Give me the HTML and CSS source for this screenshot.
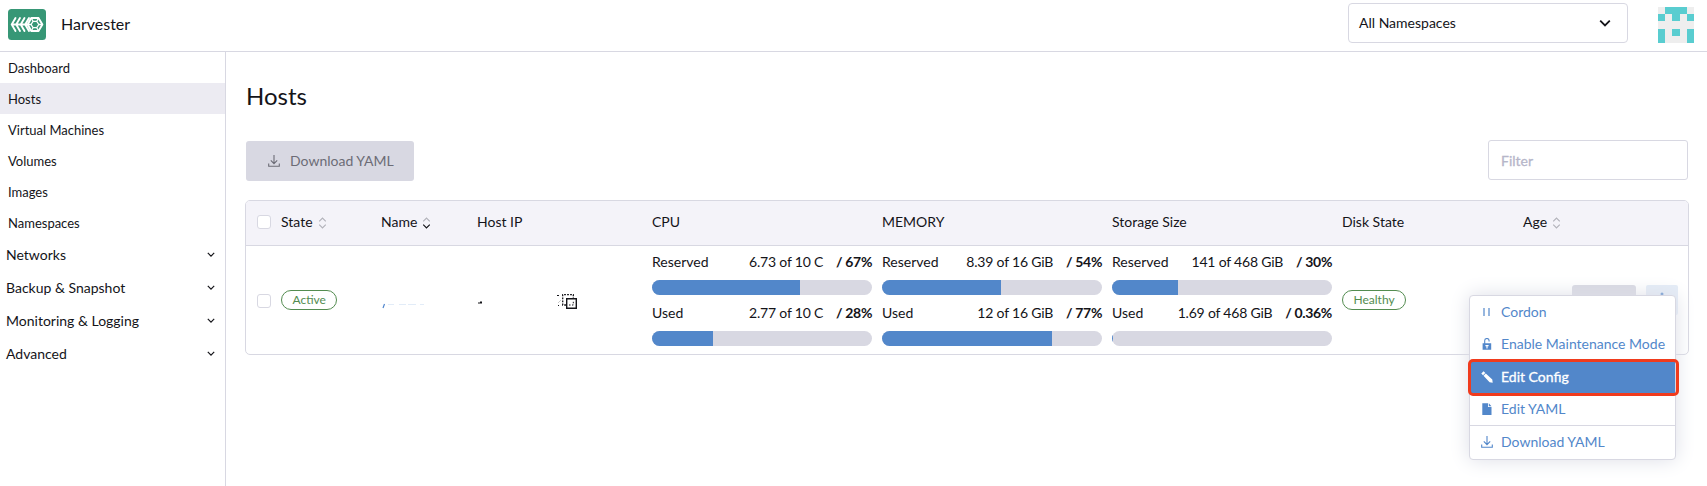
FILE: index.html
```html
<!DOCTYPE html>
<html lang="en">
<head>
<meta charset="utf-8">
<title>Harvester</title>
<link rel="stylesheet" href="styles.css">
</head>
<body>
<svg width="0" height="0" class="defs">
  <symbol id="chev" viewBox="0 0 10 6"><path d="M1 1l4 4 4-4" fill="none" stroke="currentColor" stroke-width="1.500"/></symbol>
  <symbol id="dl" viewBox="0 0 12 12"><path d="M6 0v8.500M2.800 5.400L6 8.600l3.200-3.200M.7 8.500v2.800h10.600V8.500" fill="none" stroke="currentColor" stroke-width="1.100"/></symbol>
  <symbol id="sort" viewBox="0 0 8 12"><path d="M.7 4.300L4 1l3.300 3.300" fill="none" stroke="#b3b3bb" stroke-width="1.200"/><path d="M.7 7.700L4 11l3.300-3.300" fill="none" stroke="currentColor" stroke-width="1.200"/></symbol>
</svg>
<header class="top">
  <svg class="logo" viewBox="0 0 38 31"><rect width="38" height="31" rx="3.500" fill="#379776"/>
    <g fill="none" stroke="#fff" stroke-linejoin="round" stroke-linecap="round"><path stroke-width="1.900" d="M7.500 9L3.700 15.500l3.800 6.500M12 9l-3.800 6.500L12 22M16.500 9l-3.800 6.500 3.800 6.500M21 9l-3.800 6.500L21 22M3.700 15.500H20M23.300 9h7.200l3.900 6.500-3.900 6.500h-7.200l-3.600-6.500z"/><path stroke-width="1.300" d="M25 12.300h3.800l2 3.200-2 3.200H25l-1.900-3.200zM25 12.300L23.300 9M28.800 12.300L30.500 9M30.800 15.500h3.600M28.800 18.700l1.700 3.300M25 18.700L23.300 22M19.700 15.500h3.400"/></g></svg>
  <div class="brand">Harvester</div>
  <div class="ns"><span>All Namespaces</span><svg class="nschev"><use href="#chev"/></svg></div>
  <svg class="avatar" viewBox="0 0 5 5" shape-rendering="crispEdges"><path fill="#eee" d="M0 0h5v5H0z"/><path fill="#59cdd0" d="M1 0h3v1H3v1H2V1H1zM0 1h1v1H0zM4 1h1v1H4zM0 3h1v2H0zM2 3h1v1H2zM4 3h1v2H4z"/></svg>
</header>
<div class="body">
  <nav class="side">
    <a class="item">Dashboard</a><a class="item on">Hosts</a><a class="item">Virtual Machines</a><a class="item">Volumes</a><a class="item">Images</a><a class="item">Namespaces</a>
    <a class="group"><span>Networks</span><svg><use href="#chev"/></svg></a>
    <a class="group"><span>Backup &amp; Snapshot</span><svg><use href="#chev"/></svg></a>
    <a class="group"><span>Monitoring &amp; Logging</span><svg><use href="#chev"/></svg></a>
    <a class="group"><span>Advanced</span><svg><use href="#chev"/></svg></a>
  </nav>
  <main>
    <h1>Hosts</h1>
    <div class="tools">
      <div class="btn"><svg><use href="#dl"/></svg><span>Download YAML</span></div>
      <div class="filter">Filter</div>
    </div>
    <div class="table">
      <div class="row head">
        <div><i class="check"></i></div><div>State<svg class="sort"><use href="#sort"/></svg></div><div>Name<svg class="sort dark"><use href="#sort"/></svg></div><div>Host IP</div><div>CPU</div><div>MEMORY</div><div>Storage Size</div><div>Disk State</div><div>Age<svg class="sort"><use href="#sort"/></svg></div>
      </div>
      <div class="row data">
        <div><i class="check"></i></div>
        <div><span class="pill">Active</span></div>
        <div><svg class="trace" viewBox="0 0 46 8"><path d="M3.500 1L2 5" stroke="#4c83cc" stroke-width="1.200"/><path d="M7 1.500h6M18 1.500h7M27 1.500h8M39 1.500h4" stroke="#e2ecf8" stroke-width="1"/></svg></div>
        <div class="ip"><svg class="dash" viewBox="0 0 6 4"><path d="M1 2.500h4v1H1zM3 1.500h2v1H3z" fill="#141419"/></svg><svg class="copy" viewBox="0 0 22 17"><path d="M1 3.500h2M2 13.500h1" stroke="#141419"/><path d="M2 11l3-3" stroke="#ccc"/><path d="M10 13H6.700V2.700H17.300V6" fill="none" stroke="#141419" stroke-width="1.300" stroke-dasharray="1.800 1.200"/><path d="M13 13h4.300V9" fill="none" stroke="#141419" stroke-width="1" stroke-dasharray="1.500 1.500"/><path d="M10.700 6.700h9.600v9.600h-9.600z" fill="none" stroke="#141419" stroke-width="1.400"/></svg></div>
        <div class="usage"><p><span>Reserved</span><span class="val">6.73 of 10 C</span><b>/ 67%</b></p><div class="bar"><i style="width:67.3%"></i></div><p><span>Used</span><span class="val">2.77 of 10 C</span><b>/ 28%</b></p><div class="bar"><i style="width:27.7%"></i></div></div>
        <div class="usage"><p><span>Reserved</span><span class="val">8.39 of 16 GiB</span><b>/ 54%</b></p><div class="bar"><i style="width:54%"></i></div><p><span>Used</span><span class="val">12 of 16 GiB</span><b>/ 77%</b></p><div class="bar"><i style="width:77.2%"></i></div></div>
        <div class="usage"><p><span>Reserved</span><span class="val">141 of 468 GiB</span><b>/ 30%</b></p><div class="bar"><i style="width:30%"></i></div><p><span>Used</span><span class="val">1.69 of 468 GiB</span><b>/ 0.36%</b></p><div class="bar"><i style="width:0.36%"></i></div></div>
        <div><span class="pill">Healthy</span></div>
        <div class="actions"><span class="console"></span><span class="more"><svg viewBox="0 0 4 16"><circle cx="2" cy="2" r="1.500"/><circle cx="2" cy="8" r="1.500"/><circle cx="2" cy="14" r="1.500"/></svg></span></div>
      </div>
    </div>
  </main>
</div>
<div class="menu">
  <div class="mi"><svg viewBox="0 0 12 12"><path d="M3 2v8M8 2v8" stroke="currentColor" stroke-width="1.200"/></svg><span>Cordon</span></div>
  <div class="mi"><svg viewBox="0 0 12 12"><path d="M3.700 6V2.700a2.200 2.200 0 0 1 4.400 0V3.500" fill="none" stroke="currentColor" stroke-width="1.100"/><path fill="currentColor" fill-rule="evenodd" d="M1.600 5.300h8.600v6.500H1.600zM4.400 7v1.200h1V10.500h1.200V8.200h1V7z"/></svg><span>Enable Maintenance Mode</span></div>
  <div class="mi sel"><svg viewBox="0 0 12 12"><path fill="currentColor" d="M.3 2.600L2.600.3 4.300 2 2 4.300zM2.500 4.800L4.800 2.500 11.300 8.600 11.700 11.700 8.600 11.300z"/></svg><span>Edit Config</span></div>
  <div class="mi"><svg viewBox="0 0 12 12"><path fill="currentColor" d="M1.300.3H7V4h3.500v8H1.300zM7.800.3L10.500 3.200H7.800z"/></svg><span>Edit YAML</span></div>
  <div class="mi last"><svg><use href="#dl"/></svg><span>Download YAML</span></div>
  <div class="ring"></div>
</div>
</body>
</html>
```
FILE: styles.css
```css
* { box-sizing: border-box; }
body { margin: 0; width: 1707px; height: 486px; overflow: hidden; background: #fff; color: #141419; font: 14px/21px Lato, sans-serif; position: relative; }
.defs { position: absolute; }
svg { flex: none; display: block; }
.top { height: 52px; border-bottom: 1px solid #d8d8e2; display: flex; align-items: flex-start; padding-left: 8px; }
.logo { width: 38px; height: 31px; margin-top: 9px; }
.brand { font-size: 16px; line-height: 23px; margin: 12px 0 0 15px; }
.ns { margin: 3px 0 0 auto; width: 280px; height: 40px; border: 1px solid #d8d8e2; border-radius: 4px; padding: 0 16px 1px 10px; display: flex; align-items: center; justify-content: space-between; }
.nschev { width: 12px; height: 8px; }
.avatar { width: 36px; height: 36px; margin: 7px 13px 0 30px; }
.body { display: flex; height: 434px; }
.side { width: 226px; border-right: 1px solid #d8d8e2; flex: none; }
.item { display: block; height: 31px; line-height: 32px; padding-left: 8px; font-size: 13px; }
.on { background: #ecebf2; }
.group { display: flex; height: 33px; align-items: center; justify-content: space-between; padding: 0 10px 0 6px; }
.group svg { width: 8px; height: 5px; }
main { flex: none; width: 1481px; padding: 27px 18px 0 19px; }
h1 { margin: 0 0 0 1px; font-size: 24px; line-height: 33px; font-weight: 400; }
.tools { display: flex; justify-content: space-between; margin: 28px 1px 0 1px; }
.btn { width: 168px; height: 40px; margin-top: 1px; border-radius: 3px; background: #d8d8e2; color: #6c6c76; display: flex; align-items: center; padding: 0 0 1px 22px; }
.btn svg { width: 12px; height: 12px; margin-right: 10px; }
.filter { width: 200px; height: 40px; border: 1px solid #d8d8e2; border-radius: 3px; padding: 9px 12px; color: #b6b6c9; -webkit-text-stroke: 0.3px #b6b6c9; }
.table { width: 1444px; height: 155px; margin-top: 19px; border: 1px solid #d8d8e2; border-radius: 5px; overflow: hidden; }
.row { display: grid; grid-template-columns: 35px 100px 96px 175px 230px 230px 230px 181px 165px; }
.head { height: 45px; padding-bottom: 3px; background: #f4f3f9; border-bottom: 1px solid #d8d8e2; align-items: center; }
.head > div { display: flex; align-items: center; }
.sort { width: 9px; height: 12px; margin: 3px 0 0 5px; color: #b3b3bb; }
.dark { color: #141419; }
.check { display: block; width: 14px; height: 14px; margin-left: 11px; border: 1px solid #d8d8e2; border-radius: 3px; background: #fff; }
.data { height: 108px; align-items: center; }
.data .check { margin-top: 2px; }
.pill { display: block; width: fit-content; height: 20px; border: 1px solid #538c50; border-radius: 10px; color: #538c50; padding: 0 10.500px; font-size: 12px; line-height: 18px; }
.trace { width: 46px; height: 8px; margin-top: 14px; }
.ip { display: flex; align-items: center; }
.dash { width: 6px; height: 4px; margin-top: 3px; }
.copy { width: 22px; height: 17px; margin-left: 73px; }
.usage { width: 220px; align-self: start; padding-top: 5px; }
.usage p { display: flex; margin: 0 0 8px; }
.usage .val { margin-left: auto; letter-spacing: -0.200px; }
.usage b { margin-left: 13px; letter-spacing: -0.350px; }
.bar { height: 15px; margin-bottom: 7px; background: #d8d8e2; border-radius: 8px; overflow: hidden; }
.bar i { display: block; height: 100%; background: #5287ca; }
.actions { display: flex; padding-left: 49px; gap: 10px; align-items: center; }
.console { width: 64px; height: 30px; background: #d8d8e2; border-radius: 3px; }
.more { width: 32px; height: 30px; background: #e4ecf7; border-radius: 2px; display: flex; align-items: center; justify-content: center; }
.more svg { width: 4px; height: 16px; fill: #5287ca; }
.menu { position: absolute; left: 1469px; top: 295px; width: 207px; height: 165px; background: #fff; border: 1px solid #d8d8e2; border-radius: 4px; box-shadow: 0 0 20px #dcdee7; color: #5287ca; }
.mi { display: flex; height: 32px; align-items: center; padding: 0 0 1px 11px; }
.mi svg { width: 12px; height: 12px; margin-right: 8px; }
.sel { background: #5287ca; color: #fff; height: 33px; padding-bottom: 0; -webkit-text-stroke: 0.3px #fff; }
.last { border-top: 1px solid #d8d8e2; height: 34px; padding-bottom: 2px; }
.ring { position: absolute; left: -2px; top: 63px; width: 211px; height: 37px; border: 3px solid #f03b1d; border-radius: 5px; }
```
